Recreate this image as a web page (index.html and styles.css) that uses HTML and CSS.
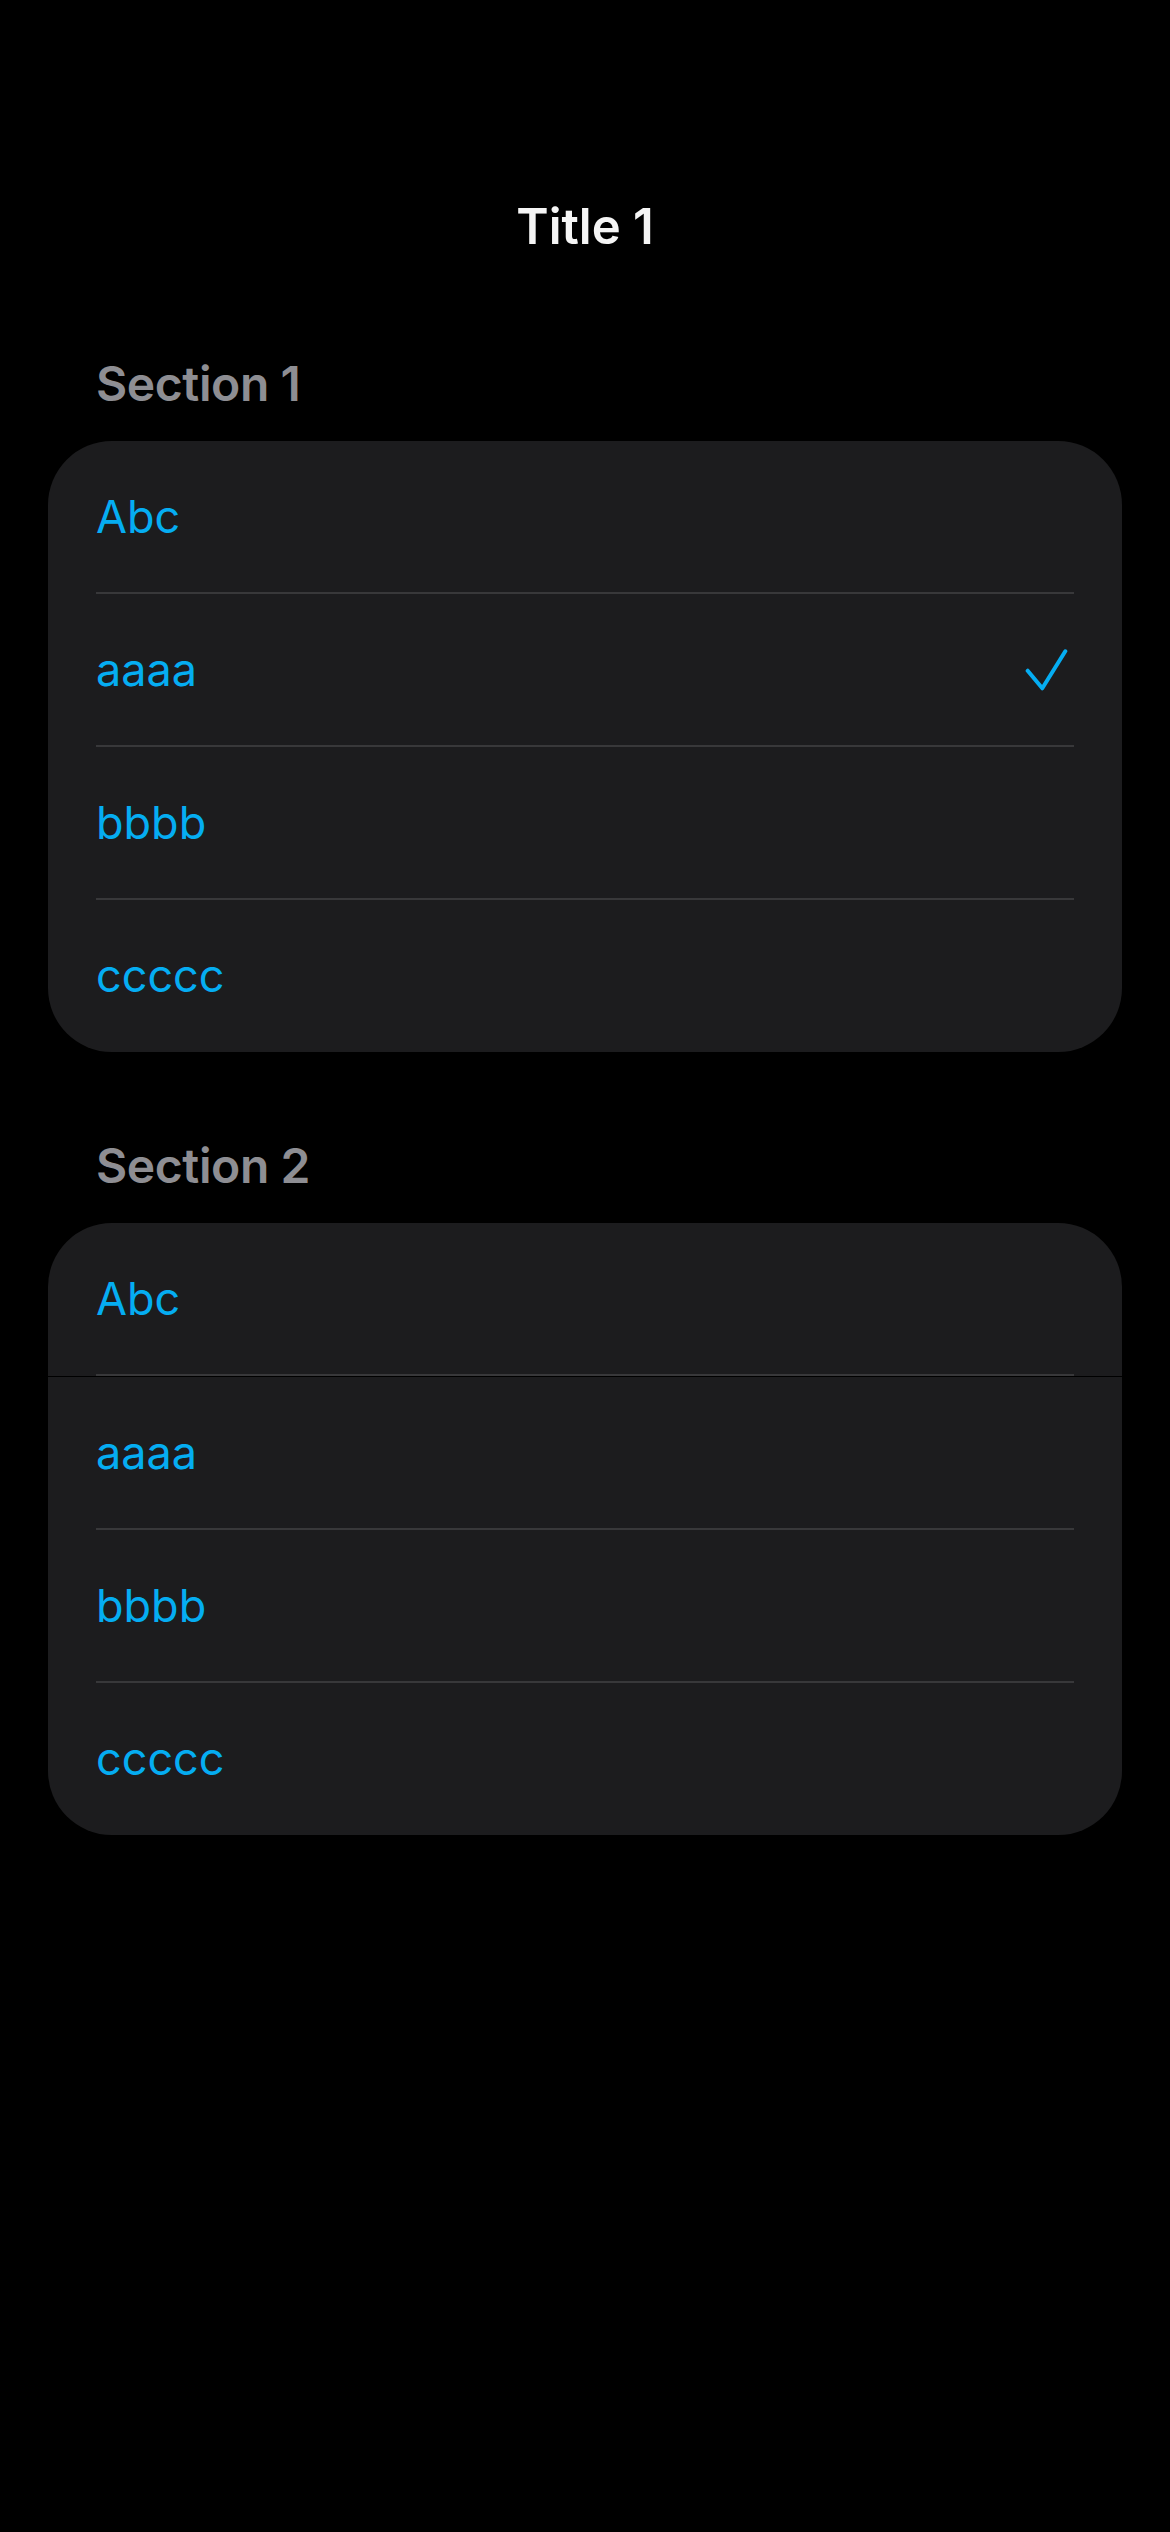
FILE: index.html
```html
<!DOCTYPE html>
<html lang="en">
<head>
<meta charset="utf-8">
<title>Title 1</title>
<link rel="stylesheet" href="styles.css">
</head>
<body>
<div class="screen">
  <header class="nav"><h1 class="nav-title">Title 1</h1></header>

  <section class="group group-first">
    <h2 class="group-header">Section 1</h2>
    <div class="card">
      <div class="row"><span class="row-label">Abc</span></div>
      <div class="sep"></div>
      <div class="row"><span class="row-label">aaaa</span>
        <svg class="check" width="44" height="44" viewBox="0 0 44 44" aria-hidden="true">
          <polyline points="3.7,22.7 18.3,40.3 41.3,3.3" fill="none" stroke="#05adf2" stroke-width="4" stroke-linecap="round" stroke-linejoin="round"/>
        </svg>
      </div>
      <div class="sep"></div>
      <div class="row"><span class="row-label">bbbb</span></div>
      <div class="sep"></div>
      <div class="row"><span class="row-label">ccccc</span></div>
    </div>
  </section>

  <section class="group group-second">
    <h2 class="group-header">Section 2</h2>
    <div class="card">
      <div class="row"><span class="row-label">Abc</span></div>
      <div class="sep"></div>
      <div class="hairline"></div>
      <div class="row"><span class="row-label">aaaa</span></div>
      <div class="sep"></div>
      <div class="row"><span class="row-label">bbbb</span></div>
      <div class="sep"></div>
      <div class="row"><span class="row-label">ccccc</span></div>
    </div>
  </section>
</div>
</body>
</html>
```

FILE: styles.css
```css
html, body {
  margin: 0;
  padding: 0;
  background: #000;
}

body {
  font-family: Inter, "Liberation Sans", sans-serif;
  -webkit-font-smoothing: antialiased;
  min-height: 2532px;
}

.screen {
  display: flex;
  flex-direction: column;
}

.nav {
  padding-top: 190px;
  height: 74px;
  display: flex;
  justify-content: center;
}

.nav-title {
  margin: 0;
  font-size: 49px;
  font-weight: 600;
  line-height: 74px;
  color: #f5f5f5;
}

.group {
  display: flex;
  flex-direction: column;
}

.group-first {
  margin-top: 85px;
}

.group-second {
  margin-top: 79px;
}

.group-header {
  margin: 0 0 22px;
  padding-left: 96px;
  height: 70px;
  line-height: 70px;
  font-size: 48px;
  font-weight: 600;
  letter-spacing: -0.4px;
  color: #8e8e93;
}

.card {
  margin: 0 48px;
  padding-bottom: 1px;
  background: #1c1c1e;
  border-radius: 64px;
  overflow: hidden;
  display: flex;
  flex-direction: column;
}

.row {
  height: 151px;
  padding: 0 54px 0 48px;
  display: flex;
  align-items: center;
  justify-content: space-between;
}

.row-label {
  font-size: 45px;
  font-weight: 400;
  color: #05adf2;
  line-height: 1;
}

.check {
  display: block;
  flex: none;
}

.sep {
  height: 2px;
  margin: 0 48px;
  background: #38383a;
}

.hairline {
  height: 1px;
  background: #000;
}
```
